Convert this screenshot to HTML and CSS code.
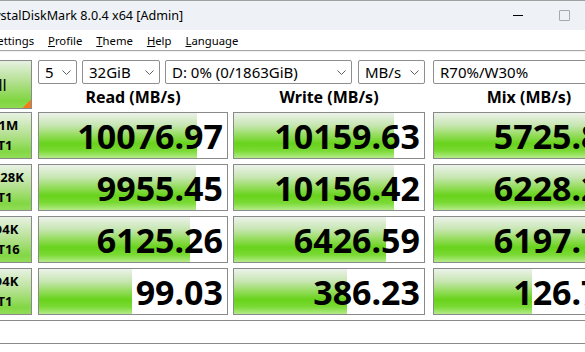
FILE: index.html
```html
<!DOCTYPE html>
<html lang="en">
<head>
    <meta charset="UTF-8">
    <title>CrystalDiskMark 8.0.4 x64 [Admin]</title>
    <link rel="stylesheet" href="styles.css">
</head>
<body>
    <div class="window">
        <div class="titlebar">
            <div class="title">CrystalDiskMark 8.0.4 x64 [Admin]</div>
            <div class="ctrl"><span class="min"></span></div>
            <div class="ctrl"><span class="max"></span></div>
            <div class="ctrl"><span class="close">&#x2715;</span></div>
        </div>

        <div class="menubar">
            <span class="menu-item"><u>F</u>ile</span>
            <span class="menu-item"><u>S</u>ettings</span>
            <span class="menu-item"><u>P</u>rofile</span>
            <span class="menu-item"><u>T</u>heme</span>
            <span class="menu-item"><u>H</u>elp</span>
            <span class="menu-item"><u>L</u>anguage</span>
        </div>

        <div class="main">
            <div class="top">
                <div class="all-btn">All</div>
                <div class="top-right">
                    <div class="combos">
                        <div class="combo c-count">5<svg class="chev" width="9" height="5" viewBox="0 0 9 5"><polyline points="0.5,0.5 4.5,4.5 8.5,0.5"/></svg></div>
                        <div class="combo c-size">32GiB<svg class="chev" width="9" height="5" viewBox="0 0 9 5"><polyline points="0.5,0.5 4.5,4.5 8.5,0.5"/></svg></div>
                        <div class="combo c-drive">D: 0% (0/1863GiB)<svg class="chev" width="9" height="5" viewBox="0 0 9 5"><polyline points="0.5,0.5 4.5,4.5 8.5,0.5"/></svg></div>
                        <div class="combo c-unit">MB/s<svg class="chev" width="9" height="5" viewBox="0 0 9 5"><polyline points="0.5,0.5 4.5,4.5 8.5,0.5"/></svg></div>
                        <div class="combo c-mix">R70%/W30%<svg class="chev" width="9" height="5" viewBox="0 0 9 5"><polyline points="0.5,0.5 4.5,4.5 8.5,0.5"/></svg></div>
                    </div>
                    <div class="heads">
                        <div class="head col-read">Read (MB/s)</div>
                        <div class="head col-write">Write (MB/s)</div>
                        <div class="head col-mix">Mix (MB/s)</div>
                    </div>
                </div>
            </div>

            <div class="row">
                <div class="label">SEQ1M<br>Q8T1</div>
                <div class="cell col-read"><div class="fill" style="width: 84%"></div><div class="val">10076.97</div></div>
                <div class="cell col-write"><div class="fill" style="width: 84%"></div><div class="val">10159.63</div></div>
                <div class="cell col-mix"><div class="fill" style="width: 100%"></div><div class="val">5725.89</div></div>
            </div>
            <div class="row">
                <div class="label">SEQ128K<br>Q1T1</div>
                <div class="cell col-read"><div class="fill" style="width: 83.5%"></div><div class="val">9955.45</div></div>
                <div class="cell col-write"><div class="fill" style="width: 84%"></div><div class="val">10156.42</div></div>
                <div class="cell col-mix"><div class="fill" style="width: 100%"></div><div class="val">6228.24</div></div>
            </div>
            <div class="row">
                <div class="label">RND4K<br>Q32T16</div>
                <div class="cell col-read"><div class="fill" style="width: 80.5%"></div><div class="val">6125.26</div></div>
                <div class="cell col-write"><div class="fill" style="width: 80%"></div><div class="val">6426.59</div></div>
                <div class="cell col-mix"><div class="fill" style="width: 100%"></div><div class="val">6197.73</div></div>
            </div>
            <div class="row">
                <div class="label">RND4K<br>Q1T1</div>
                <div class="cell col-read"><div class="fill" style="width: 49.5%"></div><div class="val">99.03</div></div>
                <div class="cell col-write"><div class="fill" style="width: 59.5%"></div><div class="val">386.23</div></div>
                <div class="cell col-mix"><div class="fill" style="width: 51.5%"></div><div class="val">126.74</div></div>
            </div>

            <div class="comment"></div>
        </div>
    </div>
</body>
</html>
```

FILE: styles.css
```css
body {
    margin: 0;
    overflow: hidden;
    background: #fff;
    font-family: "Noto Sans", "Open Sans", sans-serif;
    color: #000;
}
.window {
    margin-left: -44px;
    width: 677px;
    border-top: 1px solid #a0a0a0;
}
.titlebar {
    height: 29px;
    background: #eef2f7;
    display: flex;
    align-items: center;
}
.title {
    flex: 1;
    font-size: 12.6px;
    padding-left: 25px;
    white-space: nowrap;
}
.ctrl {
    width: 46px;
    height: 29px;
    display: flex;
    align-items: center;
    justify-content: center;
}
.min {
    width: 10px;
    height: 1px;
    background: #000;
}
.max {
    width: 9px;
    height: 9px;
    border: 1px solid #a8a8a8;
    border-radius: 1px;
}
.close {
    font-size: 11px;
}
.menubar {
    height: 20px;
    display: flex;
    align-items: center;
    font-size: 11.3px;
    border-bottom: 1px solid #a8a8a8;
}
.menu-item {
    padding: 0 7px;
    white-space: nowrap;
}
.menu-item:first-child {
    padding-left: 3px;
}
.main {
    padding: 8px 8px 0 4px;
    border-top: 1px solid #f0f0f0;
}
.top {
    display: flex;
    gap: 6px;
}
.all-btn {
    width: 72px;
    height: 49px;
    box-sizing: border-box;
    border: 1px solid #8a8a8a;
    display: flex;
    align-items: center;
    justify-content: center;
    padding-left: 3px;
    font-size: 16px;
    background:
        linear-gradient(to top left, #f57a1c 50%, transparent 50%) right bottom / 8px 8px no-repeat,
        linear-gradient(#e6f1e1, #b2e08e 45%, #7fd53e 85%, #8edb52);
}
.top-right {
    display: flex;
    flex-direction: column;
}
.combos {
    display: flex;
    height: 24px;
}
.combo {
    box-sizing: border-box;
    height: 24px;
    border: 1px solid #8e8e8e;
    border-radius: 2px;
    background: #fff;
    display: flex;
    align-items: center;
    justify-content: space-between;
    padding: 0 5px 0 6px;
    font-size: 15px;
    white-space: nowrap;
}
.chev {
    fill: none;
    stroke: #606060;
    stroke-width: 1;
}
.c-count { width: 39px; }
.c-size { width: 78px; margin-left: 5px; }
.c-drive { width: 187px; margin-left: 5px; }
.c-unit { width: 67px; margin-left: 6px; }
.c-mix { width: 192px; margin-left: 8px; }
.heads {
    display: flex;
    height: 25px;
    align-items: center;
}
.head {
    text-align: center;
    font-weight: bold;
    font-size: 16px;
    line-height: 22px;
}
.col-read { width: 190px; }
.col-write { width: 192px; margin-left: 5px; }
.col-mix { width: 192px; margin-left: 8px; }
.row {
    display: flex;
    height: 47px;
    margin-top: 5px;
}
.top + .row {
    margin-top: 3px;
}
.label {
    width: 72px;
    margin-right: 6px;
    box-sizing: border-box;
    border: 1px solid #8a8a8a;
    text-align: center;
    font-weight: bold;
    font-size: 13px;
    line-height: 20px;
    padding-top: 2px;
    background: linear-gradient(#e8f2e4, #b8e296 45%, #82d744 85%, #92dd58);
}
.cell {
    box-sizing: border-box;
    border: 1px solid #8a8a8a;
    background: #fff;
    display: grid;
}
.fill,
.val {
    grid-area: 1 / 1;
}
.fill {
    height: 100%;
    background: linear-gradient(#ecf2ea 0%, #c6e6b0 28%, #8edb52 52%, #68d31c 68%, #7ada34 84%, #b4eb8a 100%);
}
.val {
    align-self: center;
    justify-self: end;
    padding-right: 4px;
    font-weight: bold;
    font-size: 34px;
    line-height: 40px;
}
.comment {
    height: 24px;
    box-sizing: border-box;
    margin-top: 5px;
    border-top: 1px solid #8a8a8a;
    border-bottom: 1px solid #8a8a8a;
}
```
